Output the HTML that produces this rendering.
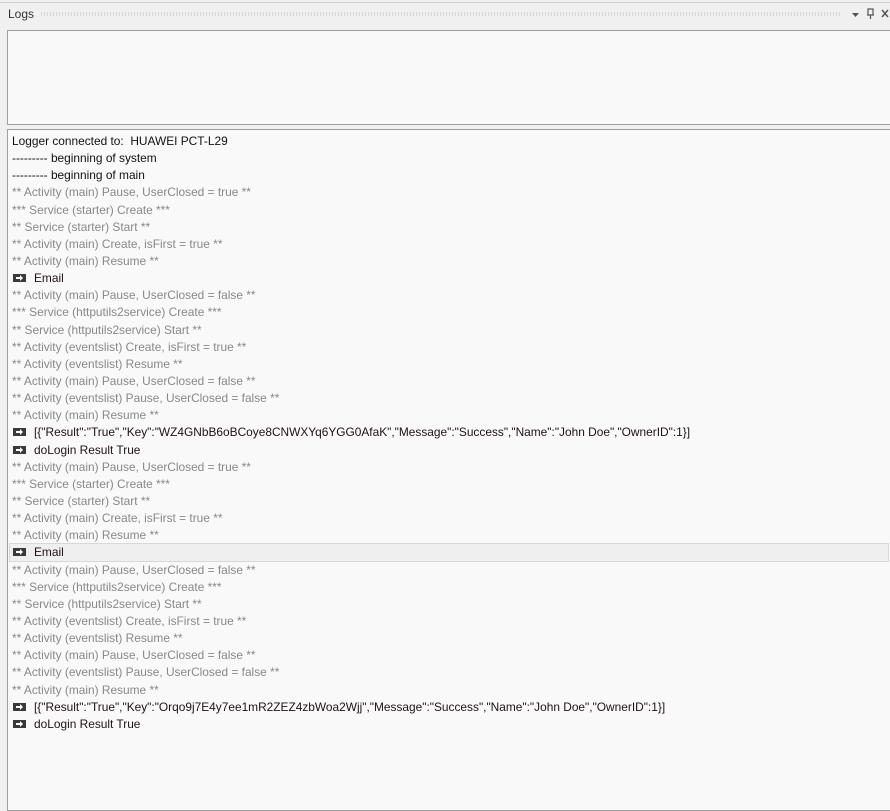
<!DOCTYPE html>
<html><head><meta charset="utf-8"><style>
body{margin:0;width:890px;height:800px;background:#f0f0f0;overflow:hidden;font-family:"Liberation Sans",sans-serif;position:relative}
.top{position:absolute;left:0;top:2px;width:890px;height:1px;background:#d0d0d0}
.title{position:absolute;left:8px;top:7px;font-size:12px;color:#333}
.dots{position:absolute;left:40px;top:12px;width:802px;height:4px;background-image:radial-gradient(circle,#bbb 0.6px,transparent 0.8px);background-size:3px 2px}
.p1{position:absolute;left:7px;top:30px;width:890px;height:93px;border:1px solid #a0a0a0;background:#f9f9f9}
.p2{position:absolute;left:7px;top:129px;width:890px;height:680px;border:1px solid #a0a0a0;background:#f9f9f9}
.lines{position:absolute;left:12px;top:133px;font-size:11.9px;line-height:17.15px;letter-spacing:0}
.l{height:17.15px;white-space:nowrap;color:#888}
.d{color:#111}
.m{color:#201018}
.ic{display:inline-block;width:13px;height:8px;background:#3a3a3a;vertical-align:0;margin:0 8px 0 1px;position:relative}
.ic:after{content:"";position:absolute;left:3px;top:3px;width:5px;height:2px;background:#fff}
.ic:before{content:"";position:absolute;left:7px;top:1px;border-left:3px solid #fff;border-top:3px solid transparent;border-bottom:3px solid transparent}
.hl{position:absolute;left:9px;top:543px;width:878px;height:17px;background:#efefef;border:1px solid #d8d8d8}
</style></head><body>
<div class="top"></div>
<div class="title">Logs</div>
<div class="dots"></div>
<svg style="position:absolute;left:850px;top:8px" width="40" height="12"><path d="M2 5h7l-3.5 4z" fill="#555"/><path d="M18 1h5v6h-5z M17 7h7 M20.5 7v4" stroke="#555" fill="none" stroke-width="1.2"/><path d="M32 2l6 7M38 2l-6 7" stroke="#555" stroke-width="1.5"/></svg>
<div class="p1"></div>
<div class="p2"></div>
<div class="hl"></div>
<div class="lines">
<div class="l d">Logger connected to:&nbsp; HUAWEI PCT-L29</div>
<div class="l d">--------- beginning of system</div>
<div class="l d">--------- beginning of main</div>
<div class="l">** Activity (main) Pause, UserClosed = true **</div>
<div class="l">*** Service (starter) Create ***</div>
<div class="l">** Service (starter) Start **</div>
<div class="l">** Activity (main) Create, isFirst = true **</div>
<div class="l">** Activity (main) Resume **</div>
<div class="l m"><span class="ic"></span>Email</div>
<div class="l">** Activity (main) Pause, UserClosed = false **</div>
<div class="l">*** Service (httputils2service) Create ***</div>
<div class="l">** Service (httputils2service) Start **</div>
<div class="l">** Activity (eventslist) Create, isFirst = true **</div>
<div class="l">** Activity (eventslist) Resume **</div>
<div class="l">** Activity (main) Pause, UserClosed = false **</div>
<div class="l">** Activity (eventslist) Pause, UserClosed = false **</div>
<div class="l">** Activity (main) Resume **</div>
<div class="l m"><span class="ic"></span>[{"Result":"True","Key":"WZ4GNbB6oBCoye8CNWXYq6YGG0AfaK","Message":"Success","Name":"John Doe","OwnerID":1}]</div>
<div class="l m"><span class="ic"></span>doLogin Result True</div>
<div class="l">** Activity (main) Pause, UserClosed = true **</div>
<div class="l">*** Service (starter) Create ***</div>
<div class="l">** Service (starter) Start **</div>
<div class="l">** Activity (main) Create, isFirst = true **</div>
<div class="l">** Activity (main) Resume **</div>
<div class="l m"><span class="ic"></span>Email</div>
<div class="l">** Activity (main) Pause, UserClosed = false **</div>
<div class="l">*** Service (httputils2service) Create ***</div>
<div class="l">** Service (httputils2service) Start **</div>
<div class="l">** Activity (eventslist) Create, isFirst = true **</div>
<div class="l">** Activity (eventslist) Resume **</div>
<div class="l">** Activity (main) Pause, UserClosed = false **</div>
<div class="l">** Activity (eventslist) Pause, UserClosed = false **</div>
<div class="l">** Activity (main) Resume **</div>
<div class="l m"><span class="ic"></span>[{"Result":"True","Key":"Orqo9j7E4y7ee1mR2ZEZ4zbWoa2Wjj","Message":"Success","Name":"John Doe","OwnerID":1}]</div>
<div class="l m"><span class="ic"></span>doLogin Result True</div>
</div>
</body></html>
